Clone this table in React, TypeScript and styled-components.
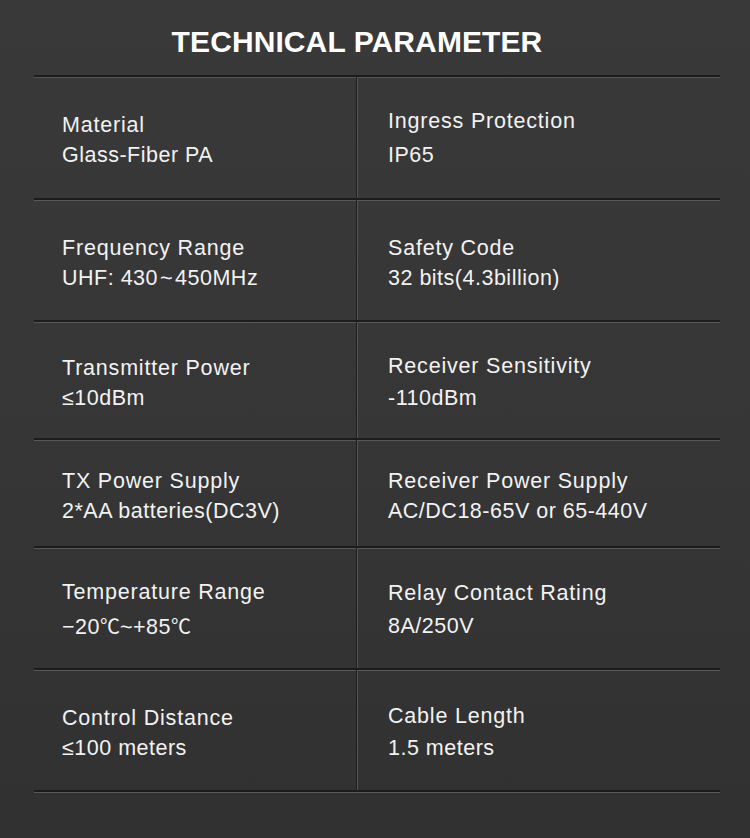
import React from "react";
import styled, { createGlobalStyle } from "styled-components";

const Global = createGlobalStyle`
  html, body { margin: 0; padding: 0; }
  body {
    width: 750px;
    height: 838px;
    background: linear-gradient(180deg, #393939 0%, #363636 50%, #313131 100%);
    font-family: "Liberation Sans", Arial, "Noto Sans CJK SC", sans-serif;
    overflow: hidden;
  }
`;

const Page = styled.div`
  width: 750px;
  height: 838px;
  display: flex;
  flex-direction: column;
  align-items: stretch;
`;

const Title = styled.h1`
  margin: 0;
  height: 75px;
  display: flex;
  align-items: center;
  justify-content: center;
  padding: 9px 36px 0 0;
  box-sizing: border-box;
  color: #ffffff;
  font-size: 30px;
  font-weight: 700;
  letter-spacing: 0.1px;
`;

const Table = styled.div`
  margin: 0 30px 0 34px;
  border-top: 2px solid #1c1c1c;
  box-shadow: inset 0 1px 0 #555;
  display: flex;
  flex-direction: column;
`;

const Row = styled.div<{ $h: number }>`
  height: ${(p) => p.$h}px;
  box-sizing: border-box;
  display: grid;
  grid-template-columns: 323px 1fr;
  border-bottom: 2px solid #1c1c1c;
  box-shadow: 0 1px 0 #595959;
`;

const Cell = styled.div<{ $divider?: boolean }>`
  display: flex;
  flex-direction: column;
  justify-content: center;
  padding: 6px 0 0 ${(p) => (p.$divider ? 28 : 31)}px;
  box-sizing: border-box;
  ${(p) =>
    p.$divider
      ? `border-right: 1px solid #1e1e1e; box-shadow: 1px 0 0 #555;`
      : ``}
`;

const Label = styled.div<{ $lift?: number }>`
  color: #f2f2f2;
  font-size: 21.5px;
  line-height: 30px;
  letter-spacing: 0.8px;
  white-space: nowrap;
  margin-top: ${(p) => -(p.$lift ?? 0)}px;
  margin-bottom: ${(p) => p.$lift ?? 0}px;
`;

const Value = styled.div`
  color: #f2f2f2;
  font-size: 21.5px;
  line-height: 31px;
  letter-spacing: 0.5px;
  white-space: nowrap;
`;

const Deg = styled.span`
  font-family: "Noto Sans CJK SC", sans-serif;
  font-size: 20px;
  letter-spacing: 0;
`;

const Tilde = styled.span`
  display: inline-block;
  margin: 0 2px;
`;

type Item = { label: string; value: React.ReactNode; lift?: number };

const rows: { h: number; left: Item; right: Item }[] = [
  {
    h: 123,
    left: { label: "Material", value: "Glass-Fiber PA" },
    right: { label: "Ingress Protection", value: "IP65", lift: 4 },
  },
  {
    h: 122,
    left: {
      label: "Frequency Range",
      value: (
        <>
          UHF: 430<Tilde>~</Tilde>450MHz
        </>
      ),
    },
    right: { label: "Safety Code", value: "32 bits(4.3billion)" },
  },
  {
    h: 118,
    left: { label: "Transmitter Power", value: "≤10dBm" },
    right: { label: "Receiver Sensitivity", value: "-110dBm", lift: 2 },
  },
  {
    h: 108,
    left: { label: "TX Power Supply", value: "2*AA batteries(DC3V)" },
    right: { label: "Receiver Power Supply", value: "AC/DC18-65V or 65-440V" },
  },
  {
    h: 122,
    left: {
      label: "Temperature Range",
      lift: 3,
      value: (
        <>
          −20<Deg>℃</Deg>~+85<Deg>℃</Deg>
        </>
      ),
    },
    right: { label: "Relay Contact Rating", value: "8A/250V", lift: 3 },
  },
  {
    h: 122,
    left: { label: "Control Distance", value: "≤100 meters" },
    right: { label: "Cable Length", value: "1.5 meters", lift: 2 },
  },
];

export default function App() {
  return (
    <Page>
      <Global />
      <Title>TECHNICAL PARAMETER</Title>
      <Table>
        {rows.map((r, i) => (
          <Row key={i} $h={r.h}>
            <Cell $divider>
              <Label $lift={r.left.lift}>{r.left.label}</Label>
              <Value>{r.left.value}</Value>
            </Cell>
            <Cell>
              <Label $lift={r.right.lift}>{r.right.label}</Label>
              <Value>{r.right.value}</Value>
            </Cell>
          </Row>
        ))}
      </Table>
    </Page>
  );
}
